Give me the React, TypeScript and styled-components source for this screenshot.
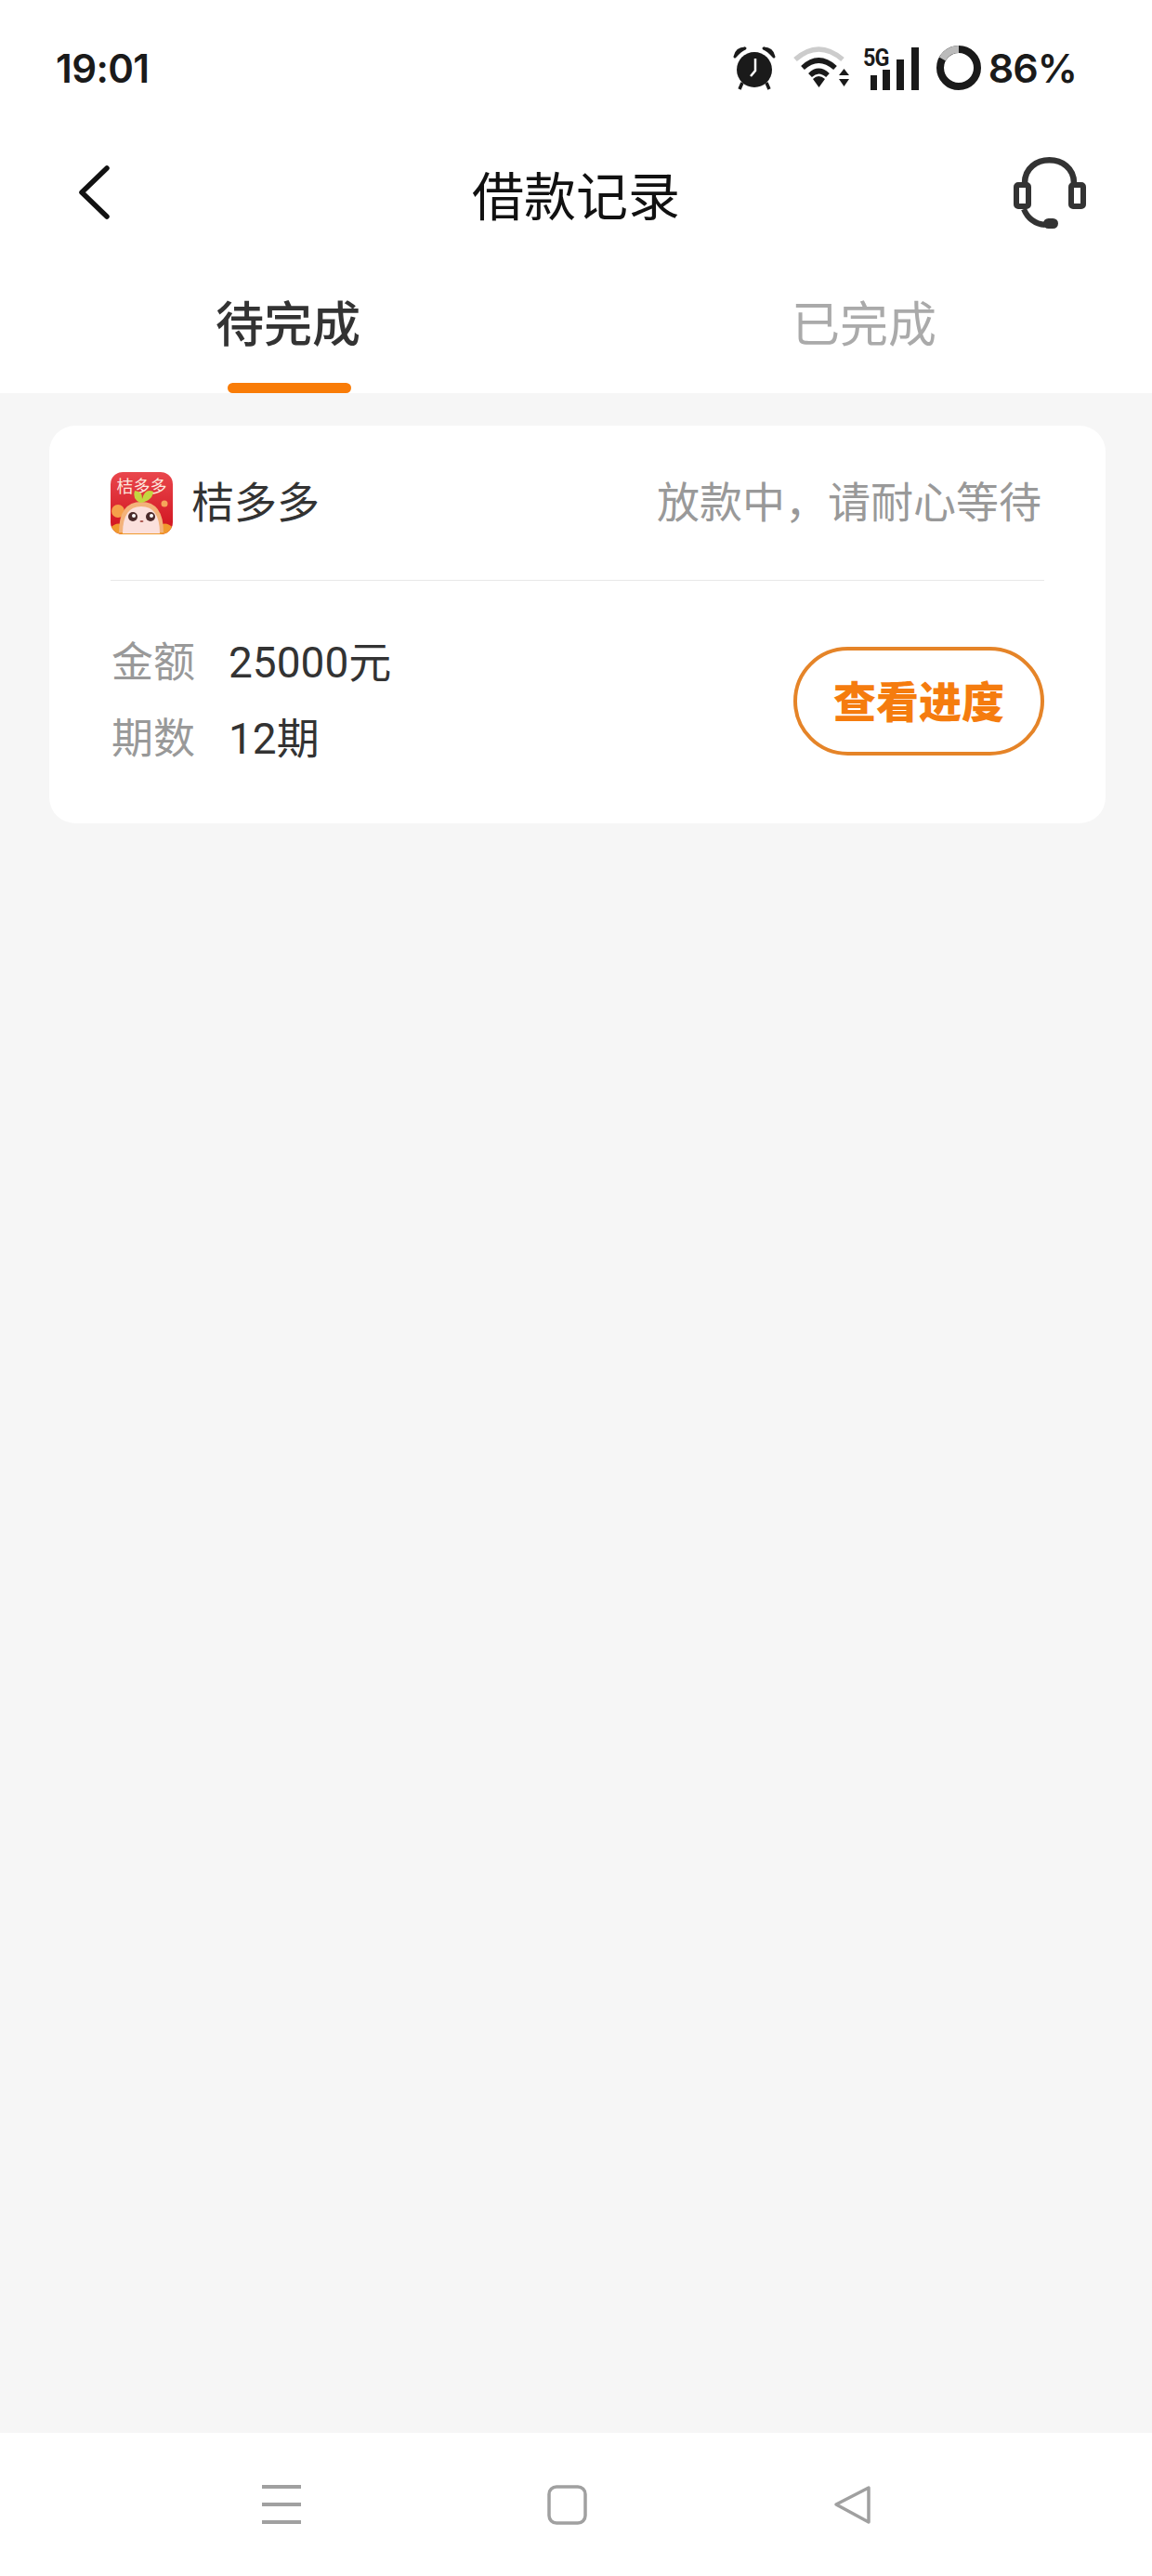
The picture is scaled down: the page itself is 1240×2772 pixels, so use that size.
import React from "react";
import styled, { createGlobalStyle } from "styled-components";

const GlobalStyle = createGlobalStyle`
  html, body {
    margin: 0;
    padding: 0;
    background: #fff;
  }
  * {
    box-sizing: border-box;
  }
`;

const CJK = `Roboto, "Noto Sans CJK SC", sans-serif`;

const Page = styled.div`
  width: 1240px;
  height: 2772px;
  display: flex;
  flex-direction: column;
  background: #f6f6f6;
  font-family: ${CJK};
  overflow: hidden;
`;

const StatusBar = styled.div`
  height: 146px;
  flex: none;
  background: #fff;
  display: flex;
  align-items: center;
  justify-content: space-between;
  padding: 0 81px 0 60px;
`;

const Time = styled.span`
  font-family: Inter, sans-serif;
  font-size: 42px;
  font-weight: 600;
  letter-spacing: -0.6px;
  color: #1a1a1a;
`;

const StatusIcons = styled.div`
  display: flex;
  align-items: center;
`;

const AlarmSvg = styled.svg`
  margin-right: 17px;
`;

const WifiSvg = styled.svg`
  margin-right: 14px;
`;

const Signal = styled.div`
  position: relative;
  width: 62px;
  height: 48px;
  margin-right: 16px;
`;

const FiveG = styled.span`
  position: absolute;
  left: 0;
  top: 2px;
  font-family: Roboto, sans-serif;
  font-size: 26px;
  line-height: 22px;
  font-weight: 700;
  letter-spacing: -1px;
  color: #1a1a1a;
  transform: scaleX(0.9);
  transform-origin: left top;
`;

const Battery = styled.span`
  font-family: Inter, sans-serif;
  font-size: 43px;
  font-weight: 600;
  letter-spacing: -1px;
  color: #1a1a1a;
  margin-left: 7px;
`;

const NavBar = styled.div`
  height: 128px;
  flex: none;
  background: #fff;
  display: grid;
  grid-template-columns: 1fr auto 1fr;
  align-items: center;
  padding: 0 70px 0 83px;
`;

const NavRight = styled.div`
  display: flex;
  justify-content: flex-end;
`;

const Title = styled.h1`
  margin: 0 13px 6px 0;
  font-size: 56px;
  font-weight: 400;
  color: #111;
`;

const BackSvg = styled.svg`
  display: block;
  margin-bottom: 6px;
`;

const HeadsetSvg = styled.svg`
  display: block;
  margin-bottom: 6px;
`;

const Tabs = styled.div`
  height: 149px;
  flex: none;
  background: #fff;
  display: grid;
  grid-template-columns: 1fr 1fr;
`;

const Tab = styled.div<{ $active?: boolean }>`
  position: relative;
  display: flex;
  justify-content: center;
  padding-top: 38px;
  font-size: 52px;
  line-height: 78px;
  font-weight: ${(p) => (p.$active ? 500 : 400)};
  color: ${(p) => (p.$active ? "#333" : "#aaa")};
`;

const TabLine = styled.span`
  position: absolute;
  left: 245px;
  bottom: 0;
  width: 133px;
  height: 11px;
  border-radius: 6px;
  background: #f97c07;
`;

const Content = styled.div`
  flex: 1;
  padding: 35px 50px 0 53px;
`;

const Card = styled.div`
  height: 428px;
  background: #fff;
  border-radius: 28px;
  padding: 0 66px;
`;

const CardHead = styled.div`
  height: 167px;
  display: flex;
  align-items: center;
  justify-content: space-between;
  border-bottom: 1px solid #e8e8e8;
`;

const Brand = styled.div`
  display: flex;
  align-items: center;
  gap: 20px;
`;

const BrandName = styled.span`
  font-size: 46px;
  color: #333;
  margin-bottom: 8px;
`;

const StatusText = styled.span`
  font-size: 46px;
  color: #999;
  margin: 0 3px 8px 0;
`;

const CardBody = styled.div`
  height: 261px;
  display: flex;
  align-items: center;
  justify-content: space-between;
  padding-bottom: 11px;
`;

const Rows = styled.div`
  display: flex;
  flex-direction: column;
  gap: 15px;
  padding-left: 1px;
`;

const Row = styled.div`
  display: flex;
  height: 67px;
  align-items: center;
  gap: 36px;
  font-size: 45px;
`;

const Label = styled.span`
  color: #999;
`;

const Value = styled.span`
  font-size: 46px;
  color: #333;
`;

const ProgressButton = styled.button`
  width: 270px;
  height: 117px;
  margin: 9px 0 0;
  padding: 0 0 6px;
  background: #fff;
  border: 4px solid #e58428;
  border-radius: 59px;
  font-family: ${CJK};
  font-size: 46px;
  font-weight: 900;
  color: #f57c0e;
`;

const SystemBar = styled.div`
  height: 154px;
  flex: none;
  background: #fff;
  display: flex;
  align-items: flex-start;
  padding: 56px 0 0 281px;
  gap: 264px;
`;

const AlarmIcon = () => (
  <AlarmSvg width="48" height="48" viewBox="0 0 48 48">
    <path d="M3 12 Q5 3 14 3 Q9 5 3 12 Z M45 12 Q43 3 34 3 Q39 5 45 12 Z" fill="#1a1a1a" stroke="#1a1a1a" strokeWidth="3" strokeLinejoin="round" />
    <circle cx="24" cy="26" r="19" fill="#1a1a1a" />
    <path d="M25 14 V27 L20 33" fill="none" stroke="#fff" strokeWidth="2.5" />
    <path d="M11 40 L8 47 M37 40 L40 47" stroke="#1a1a1a" strokeWidth="3.5" />
  </AlarmSvg>
);

const WifiIcon = () => (
  <WifiSvg width="62" height="46" viewBox="0 0 62 46">
    <path d="M3 14 Q28 -8 54 14" fill="none" stroke="#ccc" strokeWidth="5.5" />
    <path d="M11 23 Q28 7 46 23" fill="none" stroke="#1a1a1a" strokeWidth="5.5" />
    <path d="M19 31 Q28 22 38 31" fill="none" stroke="#1a1a1a" strokeWidth="5.5" />
    <path d="M22 35 Q28 29 35 35 L28.500 44 Z" fill="#1a1a1a" />
    <path d="M50 31 L55.500 24 L61 31 Z M50 35 L61 35 L55.500 43 Z" fill="#1a1a1a" />
  </WifiSvg>
);

const SignalIcon = () => (
  <Signal>
    <FiveG>5G</FiveG>
    <svg width="62" height="48" viewBox="0 0 62 48">
      <rect x="8" y="32" width="7" height="16" fill="#1a1a1a" />
      <rect x="21" y="26" width="8" height="22" fill="#1a1a1a" />
      <rect x="36" y="15" width="8" height="33" fill="#1a1a1a" />
      <rect x="52" y="2" width="8" height="46" fill="#1a1a1a" />
    </svg>
  </Signal>
);

const BatteryRing = () => (
  <svg width="50" height="50" viewBox="0 0 50 50">
    <circle cx="25" cy="25" r="20" fill="none" stroke="#1a1a1a" strokeWidth="8" />
    <path d="M25 5 A20 20 0 0 0 7.400 15.500" fill="none" stroke="#bbb" strokeWidth="8" />
  </svg>
);

const BackIcon = () => (
  <BackSvg width="36" height="60" viewBox="0 0 36 60">
    <path d="M32 4 L5 30 L32 56" fill="none" stroke="#111" strokeWidth="5.500" strokeLinecap="round" strokeLinejoin="round" />
  </BackSvg>
);

const HeadsetIcon = () => (
  <HeadsetSvg width="80" height="80" viewBox="0 0 80 80">
    <path d="M13 32 V30 C13 -3 66 -3 66 30 V32" fill="none" stroke="#333" strokeWidth="6.500" />
    <rect x="4" y="32" width="13" height="23" rx="2" fill="#fff" stroke="#333" strokeWidth="6" />
    <rect x="63" y="32" width="13" height="23" rx="2" fill="#fff" stroke="#333" strokeWidth="6" />
    <path d="M12 58 C17 70 25 74 35 75" fill="none" stroke="#333" strokeWidth="6" />
    <rect x="33" y="68" width="16" height="11" rx="5.500" fill="#333" />
  </HeadsetSvg>
);

const AppLogo = () => (
  <svg width="67" height="67" viewBox="0 0 67 67">
    <defs>
      <linearGradient id="logoBg" x1="0" y1="0" x2="0" y2="1">
        <stop offset="0" stopColor="#e9464c" />
        <stop offset="1" stopColor="#cf101c" />
      </linearGradient>
      <clipPath id="logoClip">
        <rect width="67" height="67" rx="13" />
      </clipPath>
    </defs>
    <g clipPath="url(#logoClip)">
      <rect width="67" height="67" fill="url(#logoBg)" />
      <text x="33.500" y="22" textAnchor="middle" fontFamily="Noto Sans CJK SC, sans-serif" fontSize="18" fill="#fde6dd">
        桔多多
      </text>
      <circle cx="58" cy="34" r="3.500" fill="#f6a65a" />
      <circle cx="8" cy="42" r="7" fill="#f5a04a" />
      <path d="M0 67 L0 60 Q5 54 12 56 L55 56 Q62 54 67 60 L67 67 Z" fill="#f09a2e" />
      <path d="M9 65 Q9 32 33 32 Q57 32 57 65 Z" fill="#f3b27a" />
      <path d="M13 66 Q13 37 33 37 Q53 37 53 66 Z" fill="#fbe0dc" />
      <path d="M32 33 Q23 29 26 20 Q35 21 34 29 Q37 17 46 21 Q45 31 32 33 Z" fill="#c3d640" />
      <circle cx="24" cy="48" r="5" fill="#4a2a2a" />
      <circle cx="43" cy="48" r="5" fill="#4a2a2a" />
      <circle cx="25" cy="47" r="2" fill="#fff" />
      <circle cx="44" cy="47" r="2" fill="#fff" />
      <ellipse cx="33.500" cy="53" rx="2" ry="1" fill="#a8524a" />
    </g>
  </svg>
);

const MenuIcon = () => (
  <svg width="44" height="44" viewBox="0 0 44 44">
    <path d="M1 2 H43 M1 21 H43 M1 40 H43" stroke="#a0a0a0" strokeWidth="4" />
  </svg>
);

const HomeIcon = () => (
  <svg width="44" height="44" viewBox="0 0 44 44">
    <rect x="2" y="2" width="39" height="39" rx="8" fill="none" stroke="#a0a0a0" strokeWidth="3.500" />
  </svg>
);

const TriangleIcon = () => (
  <svg width="42" height="44" viewBox="0 0 42 44">
    <path d="M38 3 V40 L3 21 Z" fill="none" stroke="#a0a0a0" strokeWidth="3.500" strokeLinejoin="round" />
  </svg>
);

export default function App() {
  return (
    <>
      <GlobalStyle />
      <Page>
        <StatusBar>
          <Time>19:01</Time>
          <StatusIcons>
            <AlarmIcon />
            <WifiIcon />
            <SignalIcon />
            <BatteryRing />
            <Battery>86%</Battery>
          </StatusIcons>
        </StatusBar>
        <NavBar>
          <BackIcon />
          <Title>借款记录</Title>
          <NavRight>
            <HeadsetIcon />
          </NavRight>
        </NavBar>
        <Tabs>
          <Tab $active>
            待完成
            <TabLine />
          </Tab>
          <Tab>已完成</Tab>
        </Tabs>
        <Content>
          <Card>
            <CardHead>
              <Brand>
                <AppLogo />
                <BrandName>桔多多</BrandName>
              </Brand>
              <StatusText>放款中，请耐心等待</StatusText>
            </CardHead>
            <CardBody>
              <Rows>
                <Row>
                  <Label>金额</Label>
                  <Value>25000元</Value>
                </Row>
                <Row>
                  <Label>期数</Label>
                  <Value>12期</Value>
                </Row>
              </Rows>
              <ProgressButton>查看进度</ProgressButton>
            </CardBody>
          </Card>
        </Content>
        <SystemBar>
          <MenuIcon />
          <HomeIcon />
          <TriangleIcon />
        </SystemBar>
      </Page>
    </>
  );
}
